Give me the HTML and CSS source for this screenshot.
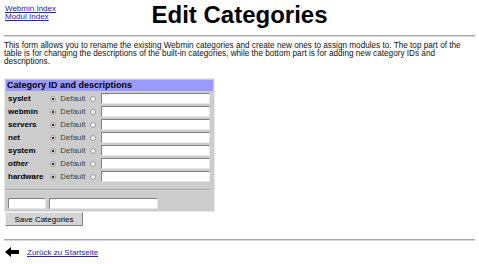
FILE: index.html
```html
<!doctype html>
<html>

<head>
	<meta charset="UTF-8">
	<title>Edit Categories</title>
	<link rel="stylesheet" href="styles.css">
</head>

<body>
	<div class="header">
		<div class="links">
			<a href="#">Webmin Index</a><br>
			<a href="#">Modul Index</a>
		</div>
		<h1>Edit Categories</h1>
	</div>
	<hr>
	<p class="intro">This form allows you to rename the existing Webmin categories and create new ones to assign modules to. The top part of the table is for changing the descriptions of the built-in categories, while the bottom part is for adding new category IDs and descriptions.</p>

	<form>
		<table class="cats">
			<tr class="head">
				<td colspan="2">Category ID and descriptions</td>
			</tr>
			<tr>
				<td class="inner">
					<table>
						<tr>
							<td class="id">syslet</td>
							<td class="opt"><input type="radio" name="d_syslet" checked> Default <input type="radio" name="d_syslet"></td>
							<td><input class="desc"></td>
						</tr>
						<tr>
							<td class="id">webmin</td>
							<td class="opt"><input type="radio" name="d_webmin" checked> Default <input type="radio" name="d_webmin"></td>
							<td><input class="desc"></td>
						</tr>
						<tr>
							<td class="id">servers</td>
							<td class="opt"><input type="radio" name="d_servers" checked> Default <input type="radio" name="d_servers"></td>
							<td><input class="desc"></td>
						</tr>
						<tr>
							<td class="id">net</td>
							<td class="opt"><input type="radio" name="d_net" checked> Default <input type="radio" name="d_net"></td>
							<td><input class="desc"></td>
						</tr>
						<tr>
							<td class="id">system</td>
							<td class="opt"><input type="radio" name="d_system" checked> Default <input type="radio" name="d_system"></td>
							<td><input class="desc"></td>
						</tr>
						<tr>
							<td class="id"><i>other</i></td>
							<td class="opt"><input type="radio" name="d_other" checked> Default <input type="radio" name="d_other"></td>
							<td><input class="desc"></td>
						</tr>
						<tr>
							<td class="id">hardware</td>
							<td class="opt"><input type="radio" name="d_hardware" checked> Default <input type="radio" name="d_hardware"></td>
							<td><input class="desc"></td>
						</tr>
						<tr>
							<td colspan="3"><hr class="sep"></td>
						</tr>
					</table>
					<div class="newcat">
						<input class="newid">
						<input class="newdesc">
					</div>
				</td>
			</tr>
		</table>
		<input type="submit" class="save" value="Save Categories">
	</form>
	<hr class="foot">
	<div class="back">
		<svg width="14" height="10" viewBox="0 0 14 10"><path d="M0 5 L6 0 L6 3 L14 3 L14 7 L6 7 L6 10 Z" fill="#000"/></svg>
		<a href="#">Zur&uuml;ck zu Startseite</a>
	</div>
</body>

</html>
```

FILE: styles.css
```css
body {
	margin: 4px;
	font-family: "Liberation Sans", Arial, sans-serif;
	font-size: 8px;
	color: #000;
	background: #fff;
}

a {
	color: #2222cc;
}

.header {
	position: relative;
	height: 30px;
}

.links {
	padding-top: 1px;
	padding-left: 1px;
	line-height: 8px;
}

h1 {
	position: absolute;
	left: 0;
	right: 0;
	top: -4px;
	margin: 0;
	text-align: center;
	font-size: 24px;
	line-height: 30px;
}

hr {
	border: 0;
	border-top: 1px solid #a8a8a8;
	border-bottom: 1px solid #d8d8d8;
	margin: 1px 0 5px;
}

.intro {
	margin: 0 0 12px;
	font-size: 8.2px;
	line-height: 8px;
	color: #111;
}

.cats {
	border: 1px solid #e8e8e8;
	border-collapse: separate;
	border-spacing: 1px;
	background: #cccccc;
	width: 211px;
}

.cats td {
	padding: 0;
}

.head td {
	background: #9999ff;
	font-weight: bold;
	font-size: 9px;
	line-height: 11px;
	padding: 0 1px;
}

.inner table {
	border-collapse: collapse;
}

.inner td {
	height: 13px;
	padding: 0;
}

.id {
	font-weight: bold;
	width: 40px;
	padding-left: 2px !important;
}

.opt {
	color: #444;
	white-space: nowrap;
	padding-right: 3px !important;
}

input[type="radio"] {
	appearance: none;
	-webkit-appearance: none;
	width: 6px;
	height: 6px;
	margin: 0 2px;
	border: 1px solid #999;
	border-radius: 50%;
	background: #f4f4f4;
	vertical-align: middle;
}

input[type="radio"]:checked {
	background: radial-gradient(circle, #222 0, #222 1.2px, #f4f4f4 1.6px);
}

input.desc,
.newcat input {
	height: 11px;
	border: 1px solid;
	border-color: #808080 #e8e8e8 #e8e8e8 #808080;
	padding: 0;
	font-size: 8px;
	background: #fff;
	box-sizing: border-box;
	display: block;
}

input.desc {
	width: 109px;
}

hr.sep {
	margin: 3px 0;
}

.newcat {
	display: flex;
	gap: 3px;
	padding: 2px 2px 1px;
}

.newid {
	width: 38px;
}

.newdesc {
	width: 109px;
}

.save {
	margin: 0 0 0 1px;
	width: 78px;
	height: 14px;
	padding: 0;
	font-family: "Liberation Sans", Arial, sans-serif;
	font-size: 8px;
	background: #d4d4d4;
	border: 1px solid;
	border-color: #f0f0f0 #808080 #808080 #f0f0f0;
}

hr.foot {
	margin: 13px 0 6px;
}

.back {
	display: flex;
	align-items: center;
	gap: 8px;
	padding-left: 1px;
}
```
